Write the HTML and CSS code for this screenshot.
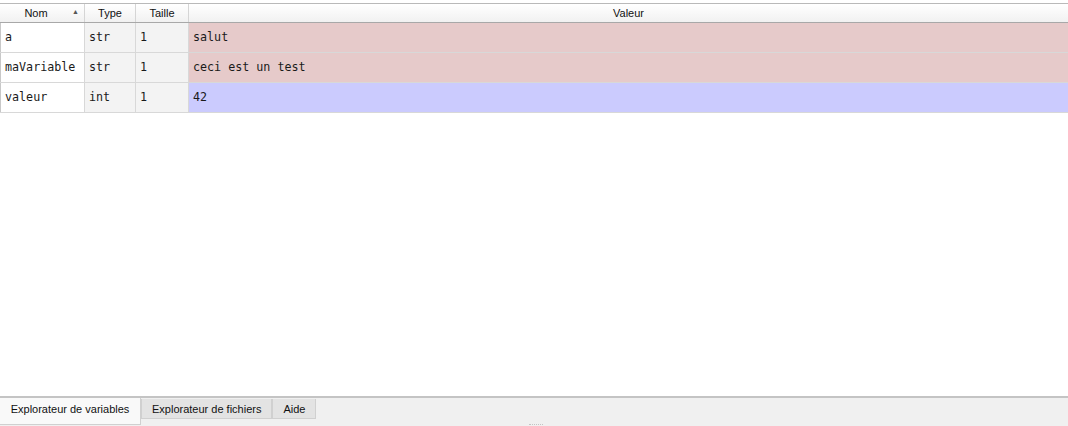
FILE: index.html
```html
<!DOCTYPE html>
<html>
<head>
<meta charset="utf-8">
<link rel="stylesheet" href="styles.css">
</head>
<body>
<div class="app">
  <div class="table">
    <div class="row head">
      <div class="cell c-nom">Nom<span class="sort">▲</span></div>
      <div class="cell c-type">Type</div>
      <div class="cell c-size">Taille</div>
      <div class="cell c-val">Valeur</div>
    </div>
    <div class="row">
      <div class="cell c-nom">a</div>
      <div class="cell c-type">str</div>
      <div class="cell c-size">1</div>
      <div class="cell c-val pink">salut</div>
    </div>
    <div class="row">
      <div class="cell c-nom">maVariable</div>
      <div class="cell c-type">str</div>
      <div class="cell c-size">1</div>
      <div class="cell c-val pink">ceci est un test</div>
    </div>
    <div class="row">
      <div class="cell c-nom">valeur</div>
      <div class="cell c-type">int</div>
      <div class="cell c-size">1</div>
      <div class="cell c-val blue">42</div>
    </div>
  </div>
  <div class="spacer"></div>
  <div class="tabbar">
    <div class="tab active">Explorateur de variables</div>
    <div class="tab">Explorateur de fichiers</div>
    <div class="tab">Aide</div>
    <div class="grip"></div>
  </div>
</div>
</body>
</html>
```

FILE: styles.css
```css
html, body {
  margin: 0;
  padding: 0;
  background: #ffffff;
}
.app {
  width: 1068px;
  height: 426px;
  display: flex;
  flex-direction: column;
  position: relative;
  overflow: hidden;
}
.table {
  margin-top: 3px;
  border-top: 1px solid #b9b9b9;
  display: flex;
  flex-direction: column;
}
.row {
  display: flex;
  height: 30px;
  border-bottom: 1px solid #d8d8d8;
  box-sizing: border-box;
}
.row .cell {
  font-family: "DejaVu Sans Mono", monospace;
  font-size: 11.7px;
  color: #1a1a1a;
  display: flex;
  align-items: center;
  padding-left: 4px;
  padding-bottom: 2px;
  box-sizing: border-box;
  border-right: 1px solid #d8d8d8;
  white-space: nowrap;
}
.row .c-nom { width: 85px; background: #ffffff; border-left: 1px solid #c8c8c8; }
.row .c-type { width: 51px; background: #f3f3f3; }
.row .c-size { width: 53px; background: #f3f3f3; }
.row .c-val { flex: 1; border-right: none; }
.pink { background: #e6caca; }
.blue { background: #cbcbfe; }
.row.head {
  height: 19px;
  border-bottom: 1px solid #a8a8a8;
  background: linear-gradient(#ffffff, #f1f1f1);
}
.row.head .cell {
  font-family: "Liberation Sans", Arial, sans-serif;
  font-size: 11px;
  color: #111;
  justify-content: center;
  padding-left: 0;
  padding-bottom: 0;
  background: transparent;
  border-right: 1px solid #d5d5d5;
  border-left: none;
}
.row.head .c-nom {
  position: relative;
  padding-right: 12px;
}
.row.head .c-val { border-right: none; }
.sort {
  position: absolute;
  right: 5px;
  top: 4px;
  font-size: 7px;
  color: #555;
}
.spacer { flex: 1; }
.tabbar {
  height: 28px;
  border-top: 2px solid #c4c4c4;
  background: #f0f0f0;
  display: flex;
  align-items: flex-start;
  position: relative;
}
.tab {
  font-family: "Liberation Sans", Arial, sans-serif;
  font-size: 11px;
  color: #111;
  height: 20px;
  margin-top: 1px;
  padding: 0 10px;
  display: flex;
  align-items: center;
  background: #e3e3e3;
  border: 1px solid #d0d0d0;
  border-top: none;
  box-sizing: border-box;
  white-space: nowrap;
}
.tab.active {
  background: #f9f9f9;
  height: 27px;
  margin-top: 0;
  align-items: flex-start;
  justify-content: center;
  padding: 5px 0 0 0;
  border-right: 1px solid #d0d0d0;
  border-left: none;
  width: 141px;
}
.grip {
  position: absolute;
  left: 529px;
  bottom: 1px;
  width: 14px;
  height: 0;
  border-top: 1px dotted #c4c4c4;
}
```
